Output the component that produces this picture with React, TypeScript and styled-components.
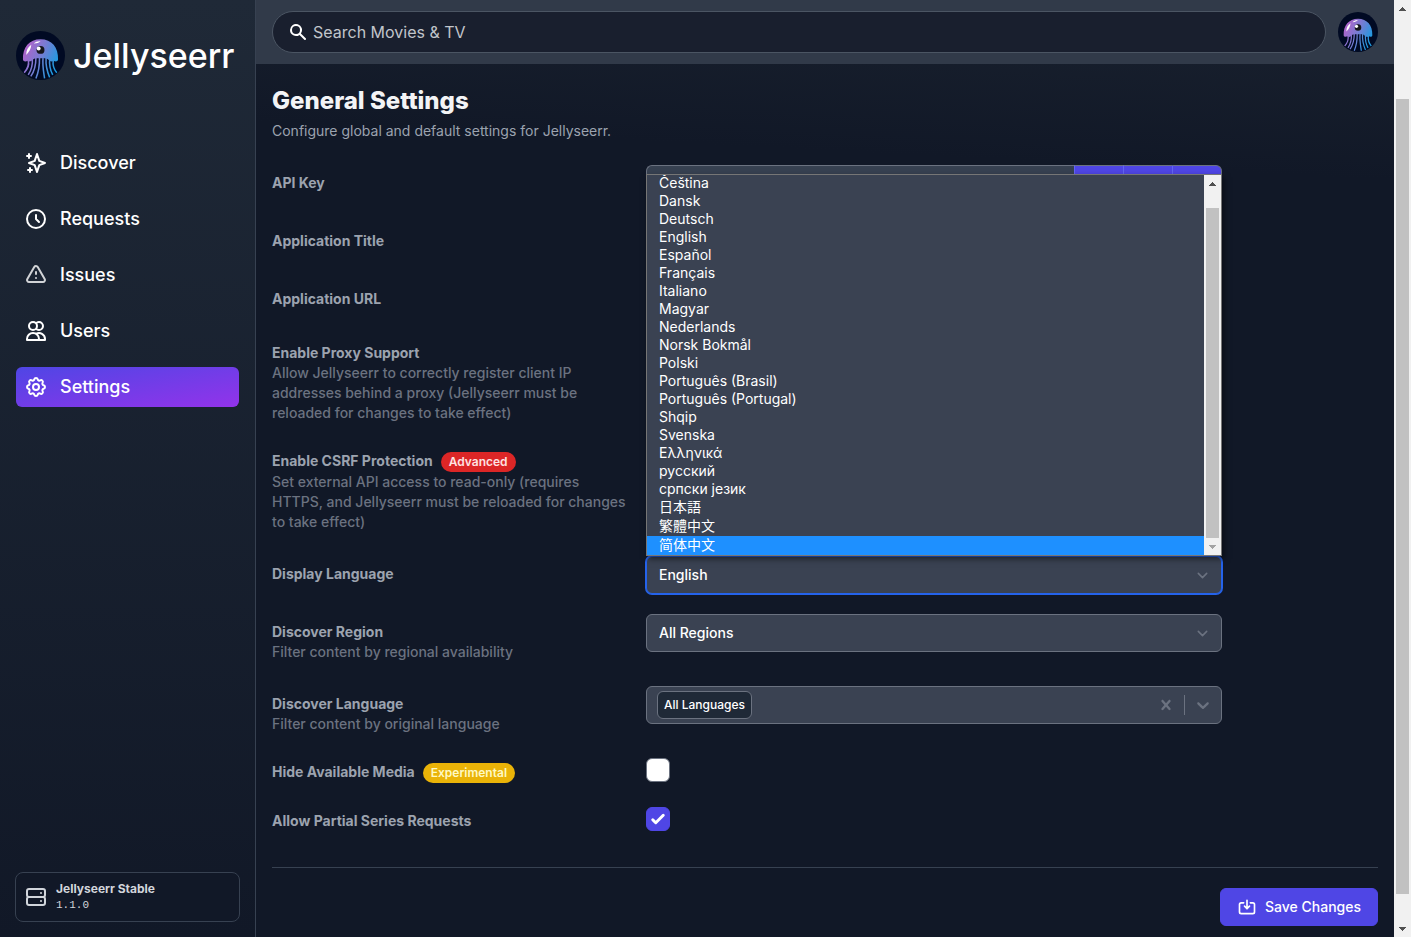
import React, { useId } from 'react';
import styled, { createGlobalStyle, css } from 'styled-components';
import {
  HiOutlineClock,
  HiOutlineCog,
  HiOutlineExclamation,
  HiOutlineSave,
  HiOutlineServer,
  HiOutlineSparkles,
  HiOutlineUsers,
  HiSearch,
} from 'react-icons/hi';

const gray = {
  100: '#f3f4f6',
  300: '#d1d5db',
  400: '#9ca3af',
  500: '#6b7280',
  600: '#4b5563',
  700: '#374151',
  800: '#1f2937',
  900: '#111827',
};

const GlobalStyle = createGlobalStyle`
  *, *::before, *::after { box-sizing: border-box; }
  body {
    margin: 0;
    background: ${gray[900]};
    color: #ffffff;
    font-family: Inter, "Noto Sans CJK SC", sans-serif;
    font-size: 14px;
    line-height: 20px;
  }
  button, input, select { font: inherit; color: inherit; margin: 0; }
`;

const Shell = styled.div`
  display: grid;
  grid-template-columns: 256px minmax(0, 1fr) 17px;
  min-height: 100vh;
`;

/* Sidebar */

const Sidebar = styled.aside`
  position: sticky;
  top: 0;
  height: 100vh;
  display: flex;
  flex-direction: column;
  padding: 32px 16px 15px 16px;
  border-right: 1px solid ${gray[700]};
  background: linear-gradient(180deg, ${gray[800]} 0%, ${gray[900]} 100%);
`;

const Brand = styled.a`
  display: flex;
  align-items: center;
  gap: 8px;
  height: 47px;
  margin-bottom: 64px;
  color: #ffffff;
  text-decoration: none;
  font-size: 34px;
  line-height: 44px;
  font-weight: 500;
`;

const LogoSvg = styled.svg<{ $size: number }>`
  flex: none;
  display: block;
  width: ${(p) => p.$size}px;
  height: ${(p) => p.$size}px;
`;

const Nav = styled.nav`
  display: flex;
  flex-direction: column;
  gap: 16px;
  flex: 1;
`;

const NavItem = styled.a<{ $active?: boolean; $muted?: boolean }>`
  display: flex;
  align-items: center;
  gap: 12px;
  height: 40px;
  padding: 0 8px;
  border-radius: 6px;
  color: #ffffff;
  text-decoration: none;
  font-size: 18px;
  line-height: 28px;
  font-weight: 500;
  ${(p) =>
    p.$active &&
    css`
      background: linear-gradient(to bottom right, #4f46e5, #9333ea);
    `}
  svg {
    width: 24px;
    height: 24px;
    opacity: ${(p) => (p.$muted ? 0.8 : 1)};
  }
`;

const VersionCard = styled.a`
  display: flex;
  align-items: center;
  gap: 8px;
  height: 50px;
  margin: 0 -1px;
  padding: 0 8px;
  border: 1px solid ${gray[700]};
  border-radius: 8px;
  background: ${gray[900]};
  color: ${gray[300]};
  text-decoration: none;
  font-size: 12px;
  line-height: 16px;
  svg {
    width: 24px;
    height: 24px;
  }
`;

const VersionText = styled.span`
  display: flex;
  flex-direction: column;
`;

const VersionNumber = styled.span`
  font-family: "Liberation Mono", monospace;
  font-size: 11px;
`;

/* Header */

const Main = styled.div`
  display: flex;
  flex-direction: column;
  background: linear-gradient(183deg, #1a222f 0, ${gray[900]} 180px);
`;

const TopBar = styled.header`
  display: flex;
  align-items: center;
  gap: 12px;
  height: 64px;
  padding: 0 16px;
  background: #313a49;
`;

const SearchBox = styled.label`
  flex: 1;
  display: flex;
  align-items: center;
  gap: 5px;
  height: 42px;
  padding: 0 15px;
  border: 1px solid ${gray[600]};
  border-radius: 21px;
  background: #191f2e;
  svg {
    width: 20px;
    height: 20px;
  }
`;

const SearchInput = styled.input`
  flex: 1;
  min-width: 0;
  padding: 0;
  border: 0;
  outline: 0;
  background: transparent;
  font-size: 16px;
  line-height: 24px;
  &::placeholder {
    color: #c1c5cb;
    opacity: 1;
  }
`;

const AvatarButton = styled.button`
  padding: 0;
  border: 0;
  border-radius: 50%;
  background: none;
`;

/* Settings form */

const Content = styled.main`
  padding: 21px 16px 11px;
`;

const Title = styled.h1`
  margin: 0;
  font-size: 24px;
  line-height: 32px;
  font-weight: 800;
  color: ${gray[100]};
`;

const Subtitle = styled.p`
  margin: 4px 0 24px;
  color: ${gray[400]};
`;

const Form = styled.form`
  display: flex;
  flex-direction: column;
  gap: 20px;
`;

const FormRow = styled.div`
  display: grid;
  grid-template-columns: repeat(3, minmax(0, 1fr));
  column-gap: 16px;
  align-items: start;
`;

const RowLabel = styled.label<{ $compact?: boolean }>`
  margin: ${(p) => (p.$compact ? 4 : 8)}px 0 4px;
  color: ${gray[400]};
  font-weight: 700;
`;

const LabelTitle = styled.span`
  display: flex;
  gap: 8px;
`;

const Hint = styled.span`
  display: block;
  color: ${gray[500]};
  font-weight: 500;
`;

const Badge = styled.span<{ $tone: 'danger' | 'warning' }>`
  margin-top: 1px;
  padding: 0 8px;
  border-radius: 10px;
  font-size: 12px;
  font-weight: 600;
  background: ${(p) => (p.$tone === 'danger' ? '#dc2626' : '#eab308')};
  color: ${(p) => (p.$tone === 'danger' ? '#fee2e2' : '#fef9c3')};
`;

const Field = styled.div`
  grid-column: span 2;
  position: relative;
  display: flex;
  width: 100%;
  max-width: 576px;
`;

const TextInput = styled.input<{ $joined?: boolean }>`
  flex: 1;
  min-width: 0;
  height: 38px;
  padding: 0 12px;
  border: 1px solid ${gray[500]};
  border-right-width: ${(p) => (p.$joined ? 0 : 1)}px;
  border-radius: ${(p) => (p.$joined ? '6px 0 0 6px' : '6px')};
  background: ${gray[700]};
`;

const KeyButton = styled.button`
  width: 49px;
  height: 38px;
  border: 1px solid ${gray[500]};
  border-left-color: #6366f1;
  border-right-width: 0;
  background: #4f46e5;
  &:last-child {
    width: 50px;
    border-right-width: 1px;
    border-radius: 0 6px 6px 0;
  }
`;

const SelectFrame = styled.div`
  display: grid;
  width: 100%;
  align-items: center;
  > * {
    grid-area: 1 / 1;
  }
  > svg {
    justify-self: end;
    width: 21px;
    height: 21px;
    margin-right: 9px;
    pointer-events: none;
  }
`;

const Select = styled.select<{ $focused?: boolean }>`
  appearance: none;
  width: 100%;
  height: 38px;
  padding: 0 40px 0 12px;
  border: 1px solid ${(p) => (p.$focused ? '#2563eb' : gray[500])};
  border-radius: 6px;
  outline: 0;
  background: #3a4252;
  font-weight: 500;
  box-shadow: ${(p) => (p.$focused ? '0 0 0 1px #2563eb' : 'none')};
`;

const Popup = styled.div`
  position: absolute;
  z-index: 2;
  left: 0;
  right: 0;
  bottom: 100%;
  display: flex;
  align-items: flex-end;
  height: 382px;
  overflow: hidden;
  border: 1px solid #767676;
  background: #3a4252;
  box-shadow: 2px 3px 6px rgba(0, 0, 0, 0.5);
`;

const OptionList = styled.ul`
  flex: 1;
  margin: 0;
  padding: 0;
  list-style: none;
  font-weight: 400;
`;

const Option = styled.li<{ $tall?: boolean; $active?: boolean }>`
  height: ${(p) => (p.$tall ? 19 : 18)}px;
  line-height: ${(p) => (p.$tall ? 17 : 18)}px;
  padding: 0 12px;
  background: ${(p) => (p.$active ? '#1e90ff' : 'transparent')};
`;

const ScrollTrack = styled.div<{ $page?: boolean }>`
  display: flex;
  flex-direction: column;
  align-items: center;
  flex: none;
  width: 17px;
  background: #f1f1f1;
  ${(p) =>
    p.$page
      ? css`
          position: sticky;
          top: 0;
          height: 100vh;
        `
      : css`
          height: 100%;
        `}
  svg {
    flex: none;
    width: 17px;
    height: 17px;
  }
`;

const ScrollSpace = styled.div<{ $share: number }>`
  flex: ${(p) => p.$share} 0 0;
`;

const ScrollThumb = styled.div<{ $share: number }>`
  flex: ${(p) => p.$share} 0 0;
  width: 13px;
  background: #c1c1c1;
`;

const MultiSelect = styled.div`
  display: flex;
  align-items: center;
  width: 100%;
  height: 38px;
  padding: 0 8px 0 10px;
  border: 1px solid ${gray[500]};
  border-radius: 6px;
  background: #3a4252;
`;

const Tag = styled.span`
  height: 28px;
  padding: 0 6px;
  border: 1px solid ${gray[500]};
  border-radius: 6px;
  background: ${gray[800]};
  font-size: 12px;
  line-height: 26px;
  font-weight: 500;
`;

const TagInput = styled.input`
  flex: 1;
  min-width: 0;
  border: 0;
  outline: 0;
  background: transparent;
`;

const IconButton = styled.button`
  display: flex;
  padding: 0;
  border: 0;
  background: none;
  color: ${gray[500]};
  svg {
    width: 20px;
    height: 20px;
    fill: currentColor;
  }
`;

const Divider = styled.span`
  width: 1px;
  height: 20px;
  margin: 0 8px;
  background: ${gray[500]};
`;

const CheckFrame = styled.span`
  display: grid;
  > * {
    grid-area: 1 / 1;
  }
  > svg {
    width: 24px;
    height: 24px;
    pointer-events: none;
    visibility: hidden;
  }
  > input:checked + svg {
    visibility: visible;
  }
`;

const CheckInput = styled.input`
  appearance: none;
  width: 24px;
  height: 24px;
  border: 1px solid ${gray[500]};
  border-radius: 6px;
  background: #ffffff;
  &:checked {
    border-color: #4f46e5;
    background: #4f46e5;
  }
`;

const Actions = styled.div`
  display: flex;
  justify-content: flex-end;
  margin-top: 12px;
  padding-top: 20px;
  border-top: 1px solid ${gray[700]};
`;

const SaveButton = styled.button`
  display: flex;
  align-items: center;
  gap: 8px;
  height: 38px;
  padding: 0 16px;
  border: 1px solid #4f46e5;
  border-radius: 6px;
  background: #4f46e5;
  font-weight: 500;
  svg {
    width: 20px;
    height: 20px;
  }
`;

function JellyfishLogo({ size }: { size: number }) {
  const id = useId();
  return (
    <LogoSvg $size={size} viewBox="0 0 48 48" aria-hidden="true">
      <defs>
        <linearGradient id={`${id}g`} gradientUnits="userSpaceOnUse" x1="7" y1="14" x2="41" y2="30">
          <stop offset="0" stopColor="#b85fc9" />
          <stop offset="0.5" stopColor="#7a7bd2" />
          <stop offset="1" stopColor="#1c9be0" />
        </linearGradient>
        <clipPath id={`${id}c`}>
          <circle cx="24" cy="24" r="23.5" />
        </clipPath>
      </defs>
      <circle cx="24" cy="24" r="24" fill="#010a23" />
      <g clipPath={`url(#${id}c)`}>
        <path
          d="M6.800 28C6.300 16 13 8 24 8S41.700 16 41.200 28c-.2 2-2.600 2.200-4.200 1.200-1.600 1-3.200 1-4.800-.7-1.800-1.700-3.400-1.700-5.200-1.700h-6c-1.800 0-3.400 0-4.800 1.700-1.600 1.700-3.200 1.700-4.800.7C9.600 30.200 7 30 6.800 28z"
          fill={`url(#${id}g)`}
        />
        <g fill="none" stroke={`url(#${id}g)`} strokeWidth="1.5">
          <path d="M12 28.500c1.200 5-.3 8-4 12.500" />
          <path d="M16 27.500c.5 6-.5 10-4 15.500" />
          <path d="M19.500 26.500c0 8-1.500 13-5 18" />
          <path d="M23 26.500c.2 8-1 14-3.500 20" />
          <path d="M26.500 26.500c-.8 7 .5 13 1.500 20" />
          <path d="M29.500 26.500c-.6 7 .5 12 3.500 19" />
          <path d="M33 27.500c-.6 6 .6 11 3 15.500" />
          <path d="M36.500 28.500c-.8 5 .6 9 3.500 12.500" />
        </g>
        <circle cx="24" cy="18.500" r="3.900" fill="#16161c" />
        <circle cx="22.200" cy="17.200" r="1.900" fill="#ffffff" />
        <path d="M10 23.500c0-4.500 1.500-7.500 5-10-.3 3.800-2 7-5 10z" fill="#ffffff" />
        <path d="M17.500 12.200c1.800-1.800 3.800-2.400 6.500-2.200-1.800 1.500-3.800 2.300-6.500 2.200z" fill="#ffffff" />
      </g>
    </LogoSvg>
  );
}

function ScrollArrow({ down, disabled }: { down?: boolean; disabled?: boolean }) {
  return (
    <svg viewBox="0 0 17 17" aria-hidden="true" shapeRendering="crispEdges">
      <path d={down ? 'M5 7h7l-3.500 4z' : 'M5 11h7L8.500 7z'} fill={disabled ? '#a3a3a3' : '#505050'} />
    </svg>
  );
}

function SelectChevron() {
  return (
    <svg viewBox="0 0 20 20" fill="none" stroke={gray[500]} strokeWidth="1.5" strokeLinecap="round" strokeLinejoin="round" aria-hidden="true">
      <path d="M6 8l4 4 4-4" />
    </svg>
  );
}

function Checkbox({ id, checked }: { id: string; checked?: boolean }) {
  return (
    <CheckFrame>
      <CheckInput type="checkbox" id={id} defaultChecked={checked} />
      <svg viewBox="0 0 16 16" fill="#ffffff" aria-hidden="true">
        <path d="M12.207 4.793a1 1 0 010 1.414l-5 5a1 1 0 01-1.414 0l-2-2a1 1 0 011.414-1.414L6.500 9.086l4.293-4.293a1 1 0 011.414 0z" />
      </svg>
    </CheckFrame>
  );
}

interface RowProps {
  id: string;
  title: string;
  hint?: string;
  badge?: { text: string; tone: 'danger' | 'warning' };
  compact?: boolean;
  children: React.ReactNode;
}

function Row({ id, title, hint, badge, compact, children }: RowProps) {
  return (
    <FormRow>
      <RowLabel htmlFor={id} $compact={compact}>
        <LabelTitle>
          {title}
          {badge && <Badge $tone={badge.tone}>{badge.text}</Badge>}
        </LabelTitle>
        {hint && <Hint>{hint}</Hint>}
      </RowLabel>
      <Field>{children}</Field>
    </FormRow>
  );
}

const navItems = [
  { label: 'Discover', icon: HiOutlineSparkles },
  { label: 'Requests', icon: HiOutlineClock },
  { label: 'Issues', icon: HiOutlineExclamation, muted: true },
  { label: 'Users', icon: HiOutlineUsers },
  { label: 'Settings', icon: HiOutlineCog, active: true },
];

const languages = [
  'Čeština',
  'Dansk',
  'Deutsch',
  'English',
  'Español',
  'Français',
  'Italiano',
  'Magyar',
  'Nederlands',
  'Norsk Bokmål',
  'Polski',
  'Português (Brasil)',
  'Português (Portugal)',
  'Shqip',
  'Svenska',
  'Ελληνικά',
  'русский',
  'српски језик',
];

const cjkLanguages = [
  { name: '日本語', lang: 'ja' },
  { name: '繁體中文', lang: 'zh-TW' },
  { name: '简体中文', lang: 'zh-CN', active: true },
];

export default function App() {
  return (
    <>
      <GlobalStyle />
      <Shell>
        <Sidebar>
          <Brand href="#">
            <JellyfishLogo size={49} />
            Jellyseerr
          </Brand>
          <Nav>
            {navItems.map(({ label, icon: Icon, active, muted }) => (
              <NavItem key={label} href="#" $active={active} $muted={muted}>
                <Icon />
                {label}
              </NavItem>
            ))}
          </Nav>
          <VersionCard href="#">
            <HiOutlineServer />
            <VersionText>
              <b>Jellyseerr Stable</b>
              <VersionNumber>1.1.0</VersionNumber>
            </VersionText>
          </VersionCard>
        </Sidebar>

        <Main>
          <TopBar>
            <SearchBox>
              <HiSearch />
              <SearchInput type="search" placeholder="Search Movies &amp; TV" aria-label="Search Movies &amp; TV" />
            </SearchBox>
            <AvatarButton type="button" aria-label="Account">
              <JellyfishLogo size={40} />
            </AvatarButton>
          </TopBar>

          <Content>
            <Title>General Settings</Title>
            <Subtitle>Configure global and default settings for Jellyseerr.</Subtitle>
            <Form onSubmit={(event) => event.preventDefault()}>
              <Row id="apiKey" title="API Key">
                <TextInput id="apiKey" type="text" readOnly $joined />
                <KeyButton type="button" aria-label="Show" />
                <KeyButton type="button" aria-label="Copy" />
                <KeyButton type="button" aria-label="Regenerate" />
              </Row>
              <Row id="applicationTitle" title="Application Title">
                <TextInput id="applicationTitle" type="text" />
              </Row>
              <Row id="applicationUrl" title="Application URL">
                <TextInput id="applicationUrl" type="text" />
              </Row>
              <Row
                id="trustProxy"
                title="Enable Proxy Support"
                hint="Allow Jellyseerr to correctly register client IP addresses behind a proxy (Jellyseerr must be reloaded for changes to take effect)"
                compact
              >
                <Checkbox id="trustProxy" />
              </Row>
              <Row
                id="csrfProtection"
                title="Enable CSRF Protection"
                badge={{ text: 'Advanced', tone: 'danger' }}
                hint="Set external API access to read-only (requires HTTPS, and Jellyseerr must be reloaded for changes to take effect)"
                compact
              >
                <Checkbox id="csrfProtection" />
              </Row>
              <Row id="locale" title="Display Language">
                <SelectFrame>
                  <Select id="locale" defaultValue="English" $focused>
                    <option>English</option>
                  </Select>
                  <SelectChevron />
                </SelectFrame>
                <Popup>
                  <OptionList role="listbox" aria-label="Display Language">
                    {languages.map((name) => (
                      <Option key={name} role="option">
                        {name}
                      </Option>
                    ))}
                    {cjkLanguages.map(({ name, lang, active }) => (
                      <Option key={name} role="option" lang={lang} aria-selected={active} $tall $active={active}>
                        {name}
                      </Option>
                    ))}
                  </OptionList>
                  <ScrollTrack>
                    <ScrollArrow />
                    <ScrollSpace $share={16} />
                    <ScrollThumb $share={330} />
                    <ScrollArrow down disabled />
                  </ScrollTrack>
                </Popup>
              </Row>
              <Row id="region" title="Discover Region" hint="Filter content by regional availability">
                <SelectFrame>
                  <Select id="region" defaultValue="All Regions">
                    <option>All Regions</option>
                  </Select>
                  <SelectChevron />
                </SelectFrame>
              </Row>
              <Row id="originalLanguage" title="Discover Language" hint="Filter content by original language">
                <MultiSelect>
                  <Tag>All Languages</Tag>
                  <TagInput id="originalLanguage" type="text" />
                  <IconButton type="button" aria-label="Clear">
                    <svg viewBox="0 0 20 20">
                      <path d="M14.348 14.849c-0.469 0.469-1.229 0.469-1.697 0l-2.651-3.030-2.651 3.029c-0.469 0.469-1.229 0.469-1.697 0-0.469-0.469-0.469-1.229 0-1.697l2.758-3.150-2.759-3.152c-0.469-0.469-0.469-1.228 0-1.697s1.228-0.469 1.697 0l2.652 3.031 2.651-3.031c0.469-0.469 1.228-0.469 1.697 0s0.469 1.229 0 1.697l-2.758 3.152 2.758 3.150c0.469 0.469 0.469 1.229 0 1.698z" />
                    </svg>
                  </IconButton>
                  <Divider />
                  <IconButton type="button" aria-label="Open">
                    <svg viewBox="0 0 20 20">
                      <path d="M4.516 7.548c0.436-0.446 1.043-0.481 1.576 0l3.908 3.747 3.908-3.747c0.533-0.481 1.141-0.446 1.574 0 0.436 0.445 0.408 1.197 0 1.615-0.406 0.418-4.695 4.502-4.695 4.502-0.217 0.223-0.502 0.335-0.787 0.335s-0.570-0.112-0.789-0.335c0 0-4.287-4.084-4.695-4.502s-0.436-1.170 0-1.615z" />
                    </svg>
                  </IconButton>
                </MultiSelect>
              </Row>
              <Row id="hideAvailable" title="Hide Available Media" badge={{ text: 'Experimental', tone: 'warning' }} compact>
                <Checkbox id="hideAvailable" />
              </Row>
              <Row id="partialRequests" title="Allow Partial Series Requests" compact>
                <Checkbox id="partialRequests" checked />
              </Row>
              <Actions>
                <SaveButton type="submit">
                  <HiOutlineSave />
                  Save Changes
                </SaveButton>
              </Actions>
            </Form>
          </Content>
        </Main>

        <ScrollTrack $page>
          <ScrollArrow />
          <ScrollSpace $share={82} />
          <ScrollThumb $share={795} />
          <ScrollSpace $share={26} />
          <ScrollArrow down />
        </ScrollTrack>
      </Shell>
    </>
  );
}
